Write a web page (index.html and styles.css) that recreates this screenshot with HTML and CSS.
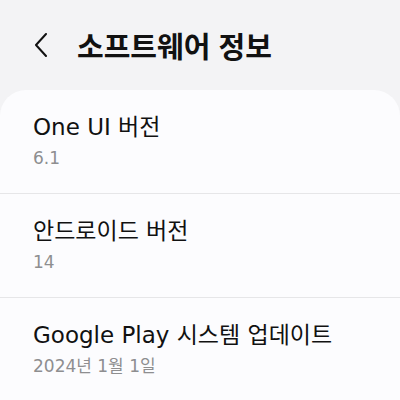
FILE: index.html
```html
<!DOCTYPE html>
<html lang="ko">
<head>
    <meta charset="UTF-8">
    <meta name="viewport" content="width=device-width, initial-scale=1.0">
    <title>소프트웨어 정보</title>
    <link rel="stylesheet" href="styles.css">
</head>
<body>

<div class="header">
    <svg class="back" width="14" height="24" viewBox="0 0 14 24">
        <path d="M12 1 L2 12 L12 23" fill="none" stroke="#111" stroke-width="2" stroke-linecap="round" stroke-linejoin="round"/>
    </svg>
    <h1 class="title">소프트웨어 정보</h1>
</div>

<div class="card">
    <div class="item">
        <div class="item-title">One UI 버전</div>
        <div class="item-sub">6.1</div>
    </div>
    <div class="item">
        <div class="item-title">안드로이드 버전</div>
        <div class="item-sub">14</div>
    </div>
    <div class="item">
        <div class="item-title">Google Play 시스템 업데이트</div>
        <div class="item-sub">2024년 1월 1일</div>
    </div>
</div>

</body>
</html>
```

FILE: styles.css
```css
body {
    margin: 0;
    font-family: 'DejaVu Sans', 'Noto Sans CJK KR', sans-serif;
    background-color: #f3f3f5;
    color: #111;
    height: 400px;
    overflow: hidden;
}
.header {
    display: flex;
    align-items: center;
    height: 90px;
    padding-left: 34px;
    box-sizing: border-box;
}
.back {
    display: block;
}
.title {
    margin: 0 0 0 29px;
    font-size: 29px;
    font-weight: 700;
    font-family: 'Noto Sans CJK KR', sans-serif;
}
.card {
    background-color: #fcfcfe;
    border-radius: 26px 26px 0 0;
    height: 320px;
}
.item {
    padding: 23px 0 23px 33px;
    border-bottom: 1px solid #e6e6e8;
}
.item-title {
    font-size: 23px;
    line-height: 28px;
}
.item-sub {
    margin-top: 6px;
    font-size: 17px;
    line-height: 23px;
    color: #8e8e90;
}
```
